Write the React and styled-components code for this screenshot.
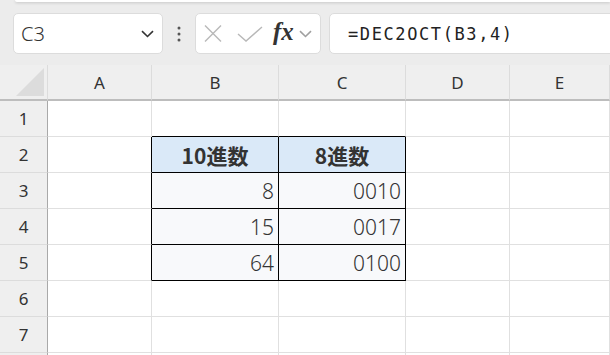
import styled, { createGlobalStyle } from "styled-components";

const GlobalStyle = createGlobalStyle`
  html, body {
    margin: 0;
    padding: 0;
    background: #ececec;
    overflow: hidden;
  }
  body {
    font-family: "Noto Sans", "Noto Sans CJK JP", sans-serif;
    color: #333;
  }
`;

const Page = styled.div`
  width: 610px;
  height: 355px;
  overflow: hidden;
`;

const TopStrip = styled.div`
  height: 2px;
  margin-left: 15px;
  background: #fff;
  border-bottom-left-radius: 6px;
  box-shadow: 0 1px 3px rgba(0, 0, 0, 0.18);
`;

const Toolbar = styled.div`
  display: flex;
  align-items: center;
  padding: 11px 0 11px 13px;
  height: 41px;
`;

const Box = styled.div`
  display: flex;
  align-items: center;
  box-sizing: border-box;
  height: 41px;
  background: #fff;
  border: 1px solid #dcdcdc;
  border-radius: 5px;
`;

const NameBox = styled(Box)`
  width: 150px;
  padding: 0 8px 0 7px;
  justify-content: space-between;
  font-size: 20px;
  font-weight: 300;
  color: #333;
`;

const Dots = styled.div`
  width: 32px;
  display: flex;
  justify-content: center;
`;

const FuncBox = styled(Box)`
  width: 126px;
  padding: 0 0 0 8px;
`;

const Fx = styled.span`
  font-family: "Liberation Serif", serif;
  font-style: italic;
  font-weight: bold;
  font-size: 25px;
  color: #333;
  margin: -4px 4px 0 10px;
`;

const FormulaBox = styled(Box)`
  flex: 1;
  margin-left: 8px;
  margin-right: -10px;
  padding-left: 18px;
  font-family: "DejaVu Sans Mono", "Liberation Mono", monospace;
  font-size: 17px;
  letter-spacing: 1.6px;
  color: #222;
`;

const Grid = styled.div`
  display: grid;
  grid-template-columns: 48px 104px 127px 127px 104px 1fr;
  grid-auto-rows: 36px;
  background: #fff;
`;

const Corner = styled.div`
  background: #efefef;
  border-right: 1px solid #dcdcdc;
  border-bottom: 2px solid #bdbdbd;
  display: flex;
  align-items: flex-end;
  justify-content: flex-end;
  padding: 0 3px 3px 0;
`;

const ColHead = styled.div`
  background: #efefef;
  border-right: 1px solid #dcdcdc;
  border-bottom: 2px solid #bdbdbd;
  display: flex;
  align-items: center;
  justify-content: center;
  font-size: 17px;
  color: #333;
`;

const RowHead = styled.div`
  background: #efefef;
  border-right: 1px solid #a9a9a9;
  border-bottom: 1px solid #dcdcdc;
  display: flex;
  align-items: center;
  justify-content: center;
  font-size: 17px;
  color: #333;
`;

const Cell = styled.div`
  display: flex;
  align-items: center;
  justify-content: ${(p) => (p.$head ? "center" : "flex-end")};
  padding: 0 4px 0 4px;
  background: ${(p) => (p.$head ? "#dae9f8" : p.$data ? "#f8f9fb" : "#fff")};
  border-right: 1px solid ${(p) => (p.$right ? "#000" : "#e0e0e0")};
  border-bottom: 1px solid ${(p) => (p.$bottom ? "#000" : "#e0e0e0")};
  font-size: ${(p) => (p.$head ? "21px" : "21px")};
  font-weight: ${(p) => (p.$head ? 700 : 300)};
  font-family: ${(p) =>
    p.$head ? '"Noto Sans CJK JP", sans-serif' : '"Noto Sans", sans-serif'};
  color: #333;
`;

const cols = ["A", "B", "C", "D", "E"];
const values = {
  2: { B: "10進数", C: "8進数" },
  3: { B: "8", C: "0010" },
  4: { B: "15", C: "0017" },
  5: { B: "64", C: "0100" },
};

const inTable = (r, c) => r >= 2 && r <= 5 && (c === "B" || c === "C");

function Chevron({ color = "#333", w = 13 }) {
  return (
    <svg width={w} height="8" viewBox="0 0 13 8">
      <path d="M1 1.2 L6.5 6.5 L12 1.2" fill="none" stroke={color} strokeWidth="1.6" />
    </svg>
  );
}

export default function App() {
  const rows = [1, 2, 3, 4, 5, 6, 7, 8];
  return (
    <Page>
      <GlobalStyle />
      <TopStrip />
      <Toolbar>
        <NameBox>
          <span>C3</span>
          <Chevron />
        </NameBox>
        <Dots>
          <svg width="4" height="16" viewBox="0 0 4 16">
            <circle cx="2" cy="2" r="1.5" fill="#555" />
            <circle cx="2" cy="8" r="1.5" fill="#555" />
            <circle cx="2" cy="14" r="1.5" fill="#555" />
          </svg>
        </Dots>
        <FuncBox>
          <svg width="18" height="17" viewBox="0 0 18 17">
            <path d="M1 0.5 L17 16.5 M17 0.5 L1 16.5" stroke="#b8b8b8" strokeWidth="1.4" />
          </svg>
          <svg width="26" height="16" viewBox="0 0 26 16" style={{ marginLeft: 15 }}>
            <path d="M1 8 L9 15 L25 1" fill="none" stroke="#b8b8b8" strokeWidth="1.4" />
          </svg>
          <Fx>fx</Fx>
          <Chevron color="#a0a0a0" w={15} />
        </FuncBox>
        <FormulaBox>=DEC2OCT(B3,4)</FormulaBox>
      </Toolbar>
      <Grid>
        <Corner>
          <svg width="28" height="28" viewBox="0 0 28 28">
            <polygon points="28,0 28,28 0,28" fill="#dcdcdc" />
          </svg>
        </Corner>
        {cols.map((c) => (
          <ColHead key={c}>{c}</ColHead>
        ))}
        {rows.map((r) => [
          <RowHead key={`h${r}`}>{r < 8 ? r : ""}</RowHead>,
          ...cols.map((c, i) => {
            const next = cols[i + 1];
            const v = values[r] && values[r][c];
            return (
              <Cell
                key={`${c}${r}`}
                $head={r === 2 && inTable(r, c)}
                $data={r > 2 && inTable(r, c)}
                $right={inTable(r, c) || (next && inTable(r, next))}
                $bottom={inTable(r, c) || inTable(r + 1, c)}
              >
                {v}
              </Cell>
            );
          }),
        ])}
      </Grid>
    </Page>
  );
}
